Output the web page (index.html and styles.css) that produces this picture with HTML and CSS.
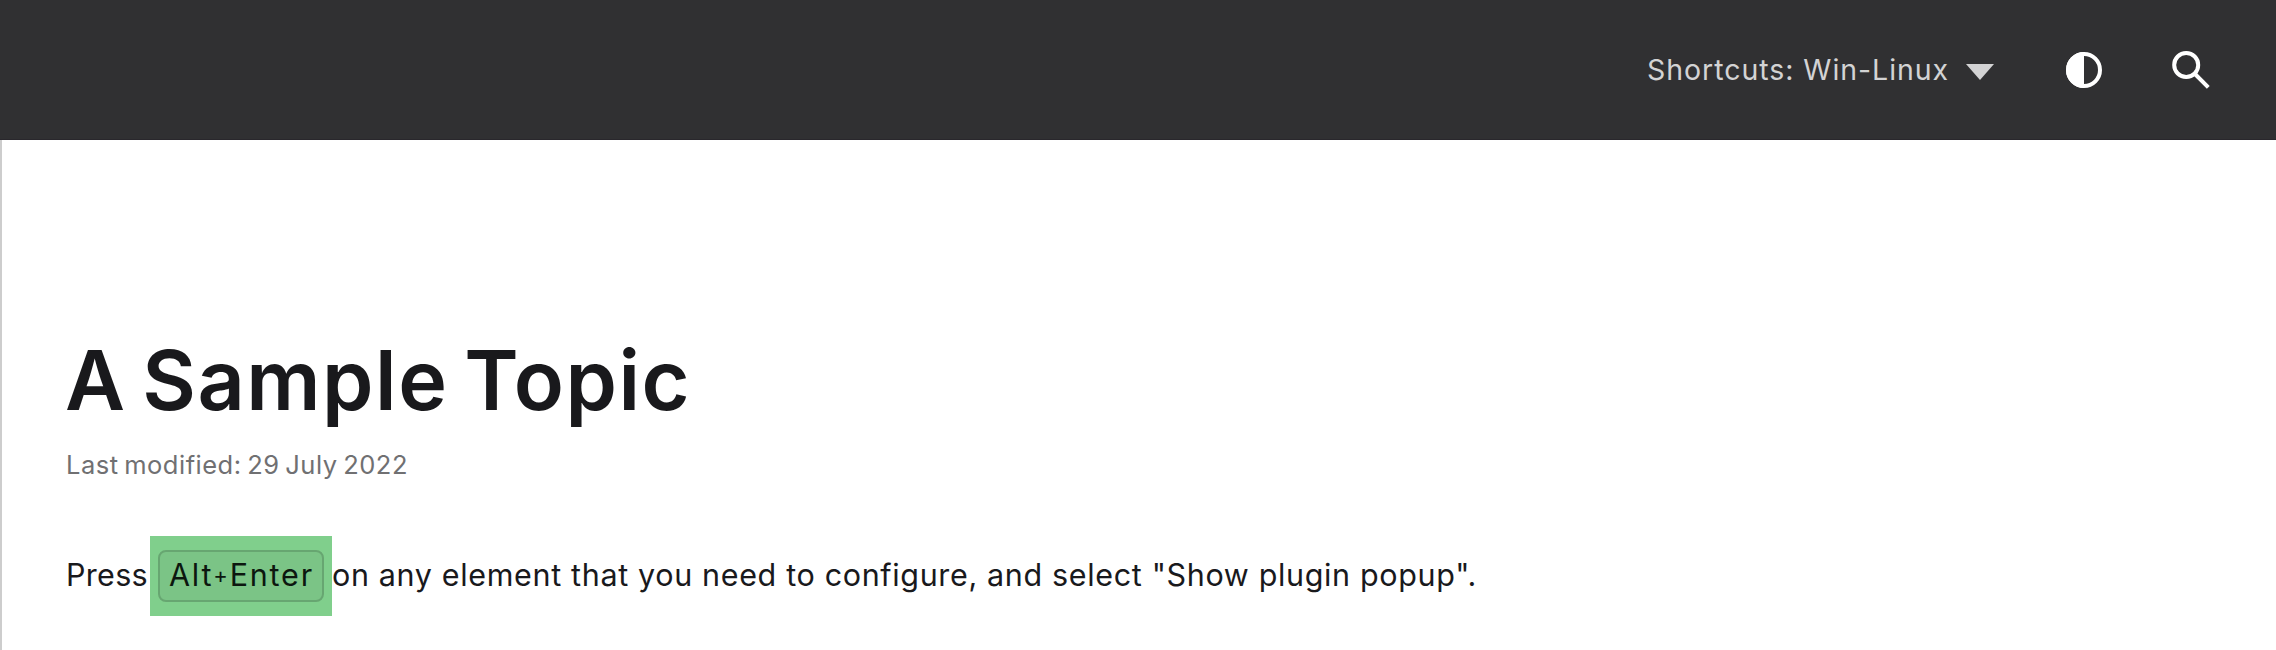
FILE: index.html
```html
<!DOCTYPE html>
<html lang="en">
<head>
<meta charset="utf-8">
<title>A Sample Topic</title>
<link rel="stylesheet" href="styles.css">
</head>
<body>
<header class="header">
  <button class="switcher"><span class="switcher-label">Shortcuts: Win-Linux</span><svg class="caret" viewBox="0 0 28 16"><path d="M0 0h28L14 16z"/></svg></button>
  <button class="icon-button" aria-label="Theme"><svg class="icon theme" viewBox="0 0 36 36"><circle cx="18" cy="18" r="16" fill="none" stroke="currentColor" stroke-width="4"/><path d="M18 0a18 18 0 0 0 0 36z" fill="currentColor"/></svg></button>
  <button class="icon-button" aria-label="Search"><svg class="icon search" viewBox="0 0 38 38"><circle cx="14.2" cy="14" r="12" fill="none" stroke="currentColor" stroke-width="4"/><path d="M22.5 22.5L36.3 36.3" fill="none" stroke="currentColor" stroke-width="4"/></svg></button>
</header>
<main class="article">
  <h1 class="title">A Sample Topic</h1>
  <p class="modified">Last modified: 29 July 2022</p>
  <p class="text"><span class="lead">Press</span><span class="highlight"><kbd class="shortcut">Alt<span class="plus">+</span>Enter</kbd></span><span class="rest">on any element that you need to configure, and select "Show plugin popup".</span></p>
</main>
</body>
</html>
```
FILE: styles.css
```css
* { box-sizing: border-box; }
body {
  margin: 0;
  height: 650px;
  display: flex;
  flex-direction: column;
  overflow: hidden;
  font-family: Inter, "Liberation Sans", sans-serif;
  background: #fff;
  color: #19191c;
}
button { border: 0; padding: 0; margin: 0; background: none; font: inherit; color: #fff; }
.header {
  display: flex;
  align-items: center;
  justify-content: flex-end;
  height: 140px;
  padding-right: 66px;
  background: #303032;
  border-bottom: 1px solid #29272c;
}
.switcher {
  display: flex;
  align-items: center;
  width: 347px;
  margin-right: 72px;
  color: #d3d3d4;
}
.switcher-label { font-size: 28.5px; line-height: 40px; letter-spacing: 0.95px; white-space: nowrap; }
.caret { width: 28px; height: 16px; margin-left: auto; margin-top: 4px; fill: #d3d3d4; }
.icon-button { display: flex; }
.icon { display: block; }
.theme { width: 36px; height: 36px; margin-right: 70px; }
.search { width: 38px; height: 38px; }
.article {
  flex: 1;
  padding: 189px 0 0 65px;
  border-left: 2px solid #cdcdcd;
}
.title { margin: 0 0 0 -2px; font-size: 82.5px; line-height: 102px; font-weight: 600; letter-spacing: 1.5px; word-spacing: -6.5px; white-space: nowrap; }
.modified { margin: 18px 0 0 -1px; font-size: 25.5px; line-height: 32px; letter-spacing: 0.5px; word-spacing: -2px; color: #707072; }
.text { display: flex; align-items: center; height: 80px; margin: 55px 0 0; font-size: 30.5px; line-height: 40px; white-space: nowrap; }
.lead { width: 84px; margin: 0 0 2px -1px; letter-spacing: 0.3px; }
.rest { margin-bottom: 2px; letter-spacing: 0.65px; }
.highlight { display: flex; align-items: center; justify-content: center; width: 182px; height: 80px; background: #80cf8c; }
.shortcut {
  display: flex;
  align-items: center;
  justify-content: center;
  width: 166px;
  height: 52px;
  padding: 0 0 2px 1px;
  border: 2px solid #67a671;
  border-radius: 8px;
  background: #7bc486;
  color: #0c170f;
  font-family: inherit;
  font-size: 30.5px;
  letter-spacing: 1.8px;
}
.plus { font-size: 22px; }
```
